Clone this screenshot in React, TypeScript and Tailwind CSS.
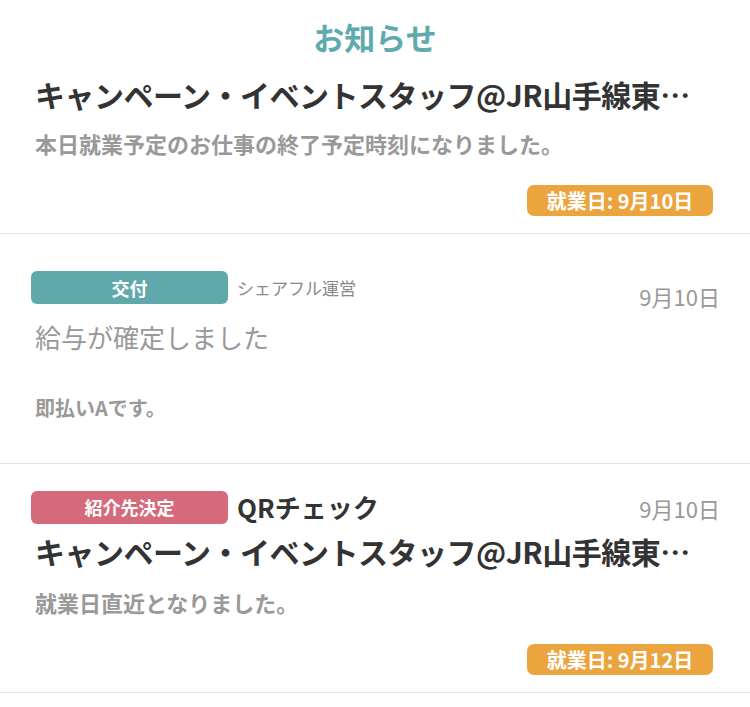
const font = "font-['Noto_Sans_CJK_JP','Noto_Sans',sans-serif]";

function WorkBadge({ label }: { label: string }) {
  return (
    <div className="mr-[7px] mt-[27px] flex justify-end">
      <span className="flex h-[31px] w-[186px] items-center justify-center rounded-[7px] bg-[#eba43e] text-[20px] font-bold leading-none text-white">
        {label}
      </span>
    </div>
  );
}

function Tag({ label, color }: { label: string; color: string }) {
  return (
    <span
      className={`flex h-[33px] w-[197px] shrink-0 items-center justify-center rounded-[6px] text-[18px] font-bold leading-none text-white ${color}`}
    >
      {label}
    </span>
  );
}

function JobTitle() {
  return (
    <p className="whitespace-nowrap pl-[4px] text-[30px] font-bold leading-[40px] tracking-[-0.5px] text-[#333]">
      キャンペーン・イベントスタッフ@JR山手線東…
    </p>
  );
}

export default function App() {
  return (
    <div className={`w-[750px] overflow-hidden bg-white ${font}`}>
      <h1 className="pb-[17px] pt-[17px] text-center text-[31px] font-bold leading-[40px] text-[#5eaaae]">
        お知らせ
      </h1>

      {/* 就業終了 */}
      <div className="border-b border-[#e5e5e5] pb-[17px] pl-[31px] pr-[30px]">
        <JobTitle />
        <p className="mt-[14px] pl-[4px] text-[22px] font-bold leading-[30px] text-[#999]">
          本日就業予定のお仕事の終了予定時刻になりました。
        </p>
        <WorkBadge label="就業日: 9月10日" />
      </div>

      {/* 給与 */}
      <div className="border-b border-[#e5e5e5] pb-[40px] pl-[31px] pr-[30px] pt-[37px]">
        <div className="flex items-start justify-between">
          <div className="flex items-center">
            <Tag label="交付" color="bg-[#5fa9ad]" />
            <span className="ml-[9px] text-[17px] leading-[24px] text-[#888]">シェアフル運営</span>
          </div>
          <span className="mt-[10px] text-[22px] leading-[30px] text-[#999]">9月10日</span>
        </div>
        <p className="mt-[8px] pl-[4px] text-[26px] leading-[36px] text-[#999]">給与が確定しました</p>
        <p className="mt-[38px] pl-[4px] text-[20px] font-bold leading-[30px] text-[#999]">即払いAです。</p>
      </div>

      {/* QRチェック */}
      <div className="border-b border-[#e5e5e5] pb-[17px] pl-[31px] pr-[30px] pt-[25px]">
        <div className="flex items-start justify-between">
          <div className="flex items-center">
            <Tag label="紹介先決定" color="bg-[#d56a7c]" />
            <span className="ml-[9px] text-[26px] font-bold leading-[36px] text-[#333]">QRチェック</span>
          </div>
          <span className="mt-[4px] text-[22px] leading-[30px] text-[#999]">9月10日</span>
        </div>
        <div className="mt-[6px]">
          <JobTitle />
        </div>
        <p className="mt-[16px] pl-[4px] text-[22px] font-bold leading-[30px] text-[#999]">
          就業日直近となりました。
        </p>
        <WorkBadge label="就業日: 9月12日" />
      </div>
    </div>
  );
}
